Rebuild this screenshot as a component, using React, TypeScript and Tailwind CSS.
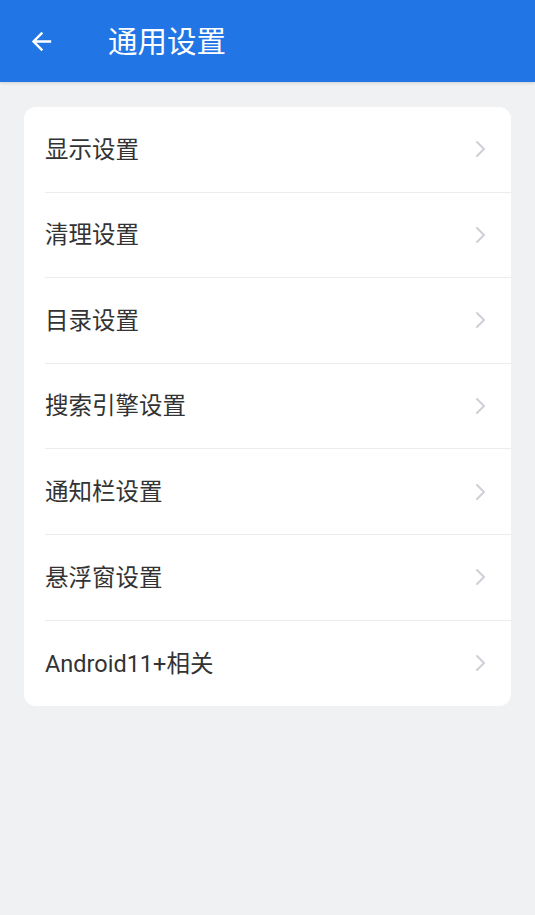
import { FC } from 'react'

const items = ['显示设置', '清理设置', '目录设置', '搜索引擎设置', '通知栏设置', '悬浮窗设置', 'Android11+相关']

const Chevron: FC = () => (
  <svg width="14" height="18" viewBox="0 0 14 18" fill="none" className="shrink-0">
    <path d="M3 2l7 7-7 7" stroke="#cdd0d8" strokeWidth="2" strokeLinecap="round" strokeLinejoin="round" />
  </svg>
)

export default function App() {
  return (
    <div
      className="w-[535px] h-[915px] bg-[#f0f1f3] flex flex-col"
      style={{ fontFamily: 'Roboto, "Noto Sans CJK SC", sans-serif' }}
    >
      <header className="h-[82px] bg-[#2175e4] flex items-center shrink-0 shadow-[0_1px_3px_rgba(0,0,0,0.15)]">
        <div className="w-[108px] flex items-center pl-[27px]">
          <svg width="29" height="29" viewBox="0 0 24 24" fill="white">
            <path d="M20 11H7.83l5.59-5.59L12 4l-8 8 8 8 1.41-1.41L7.83 13H20v-2z" />
          </svg>
        </div>
        <h1 className="text-white text-[29.5px] leading-none mt-[3px]">通用设置</h1>
      </header>
      <main className="px-6 pt-[25px]">
        <div className="bg-white rounded-xl">
          {items.map((item, i) => (
            <div key={item} className="pl-[21px]">
              <div
                className={
                  'flex items-center justify-between h-[85.6px] pr-[23px] ' +
                  (i < items.length - 1 ? 'border-b border-[#ececee]' : '')
                }
              >
                <span className="text-[23.5px] text-[#333333] leading-none mt-[2px]">{item}</span>
                <Chevron />
              </div>
            </div>
          ))}
        </div>
      </main>
    </div>
  )
}
